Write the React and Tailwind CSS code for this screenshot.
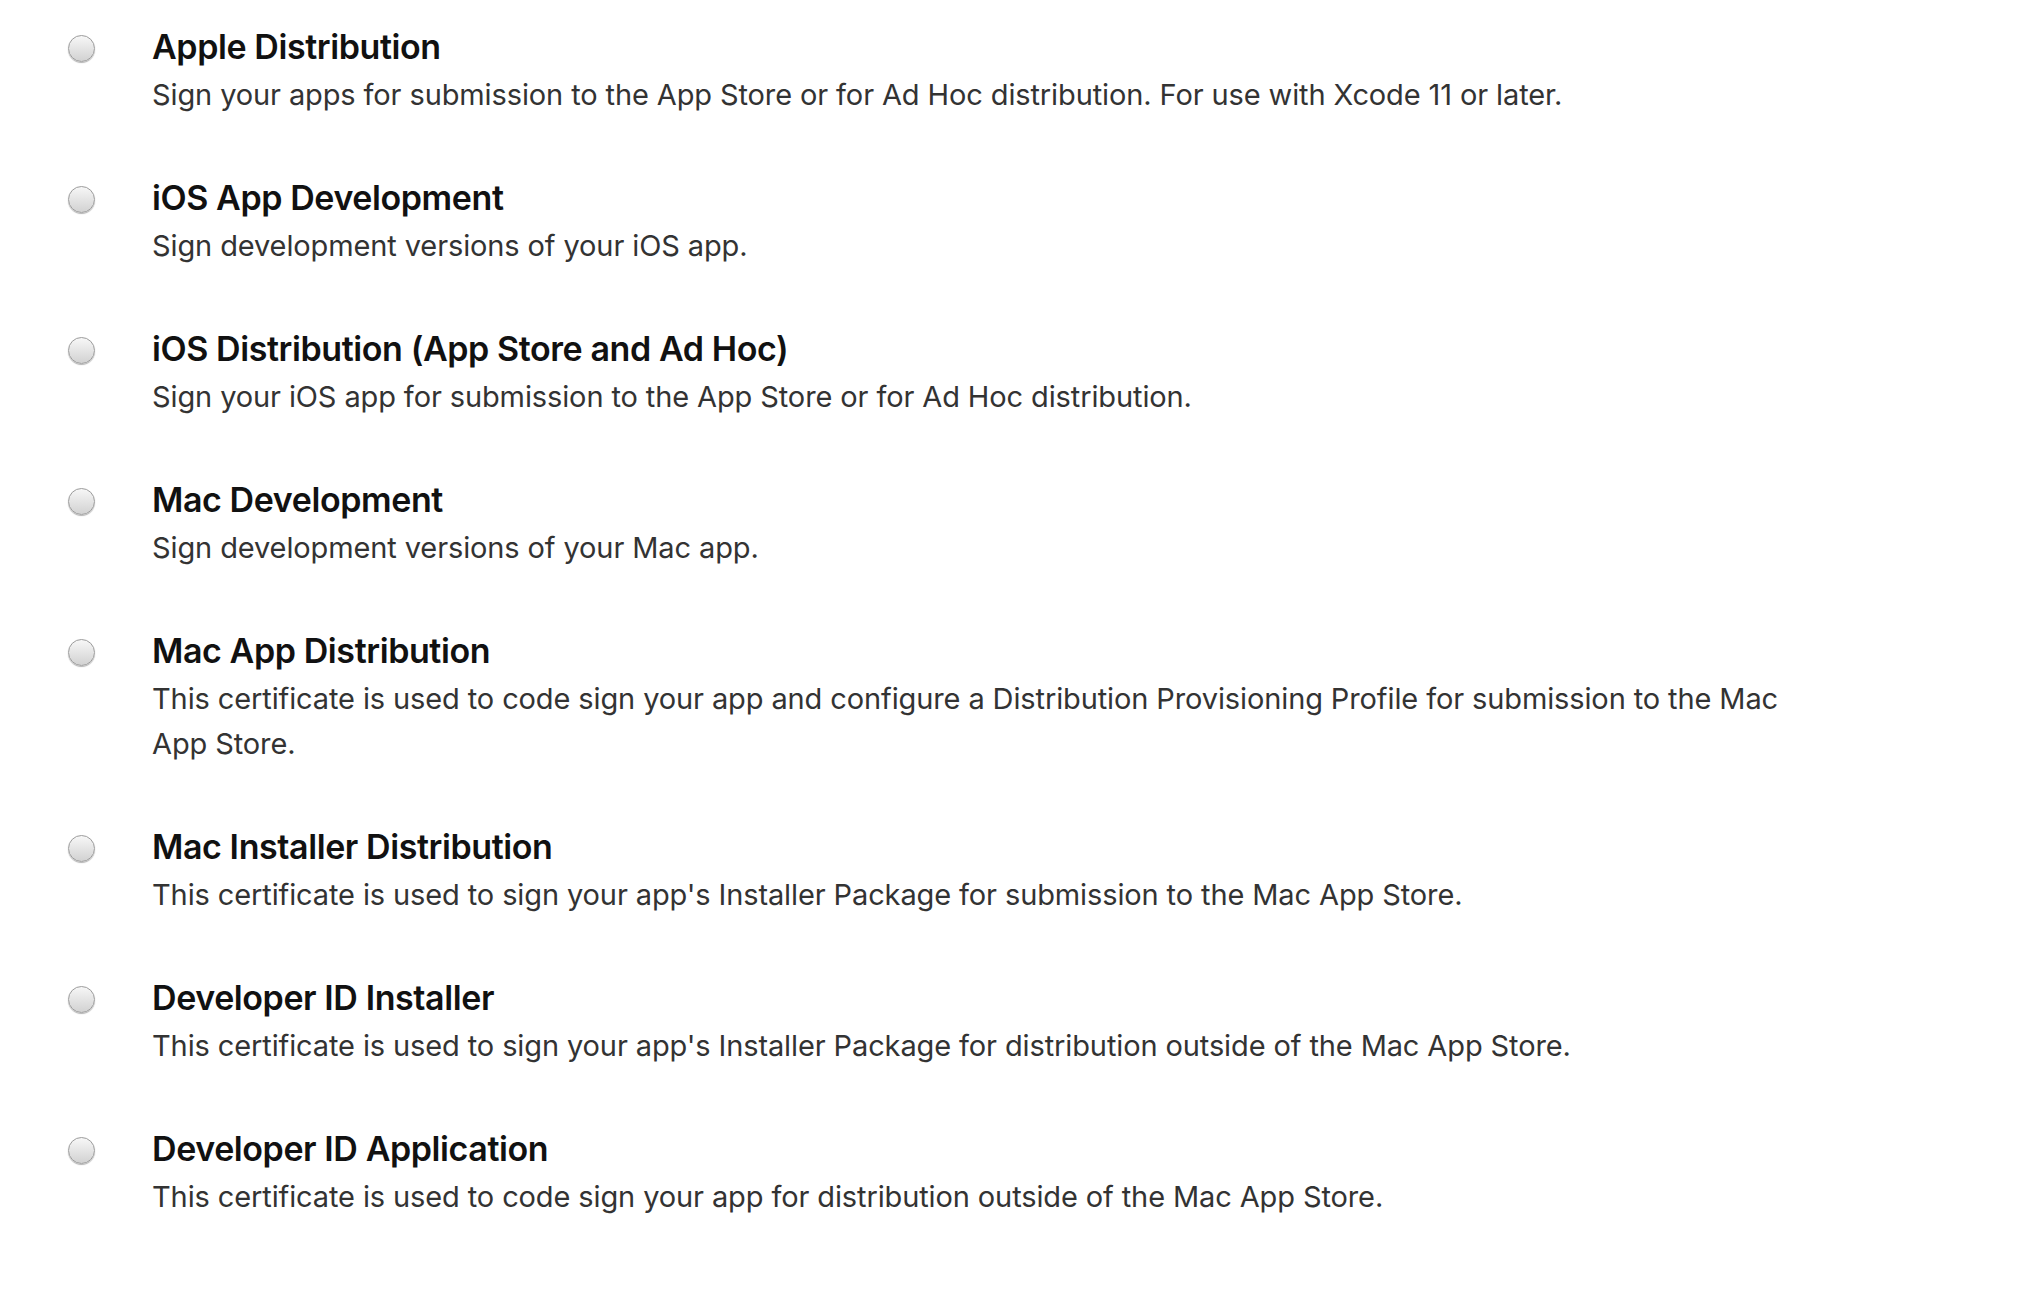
import React from "react";

const items = [
  {
    title: "Apple Distribution",
    desc: "Sign your apps for submission to the App Store or for Ad Hoc distribution. For use with Xcode 11 or later.",
  },
  { title: "iOS App Development", desc: "Sign development versions of your iOS app." },
  {
    title: "iOS Distribution (App Store and Ad Hoc)",
    desc: "Sign your iOS app for submission to the App Store or for Ad Hoc distribution.",
  },
  { title: "Mac Development", desc: "Sign development versions of your Mac app." },
  {
    title: "Mac App Distribution",
    desc: "This certificate is used to code sign your app and configure a Distribution Provisioning Profile for submission to the Mac App Store.",
  },
  {
    title: "Mac Installer Distribution",
    desc: "This certificate is used to sign your app's Installer Package for submission to the Mac App Store.",
  },
  {
    title: "Developer ID Installer",
    desc: "This certificate is used to sign your app's Installer Package for distribution outside of the Mac App Store.",
  },
  {
    title: "Developer ID Application",
    desc: "This certificate is used to code sign your app for distribution outside of the Mac App Store.",
  },
];

function Radio() {
  return (
    <div className="mt-[13px] h-[27px] w-[27px] shrink-0 rounded-full border border-[#9c9c9c] bg-gradient-to-b from-[#f7f7f7] to-[#d2d2d2] shadow-[0_1px_1px_rgba(0,0,0,0.3)]" />
  );
}

export default function App() {
  return (
    <div className="min-h-screen w-full bg-white pl-[68px] pt-[22px] font-['Inter',sans-serif]">
      <div className="flex flex-col gap-[56px]">
        {items.map((it) => (
          <label key={it.title} className="flex items-start gap-[57px]">
            <Radio />
            <div className="w-[1660px]">
              <div className="text-[34px] font-semibold leading-[50px] tracking-[-0.012em] text-[#111]">
                {it.title}
              </div>
              <div className="text-[29px] leading-[45px] tracking-[-0.004em] text-[#333]">
                {it.desc}
              </div>
            </div>
          </label>
        ))}
      </div>
    </div>
  );
}
